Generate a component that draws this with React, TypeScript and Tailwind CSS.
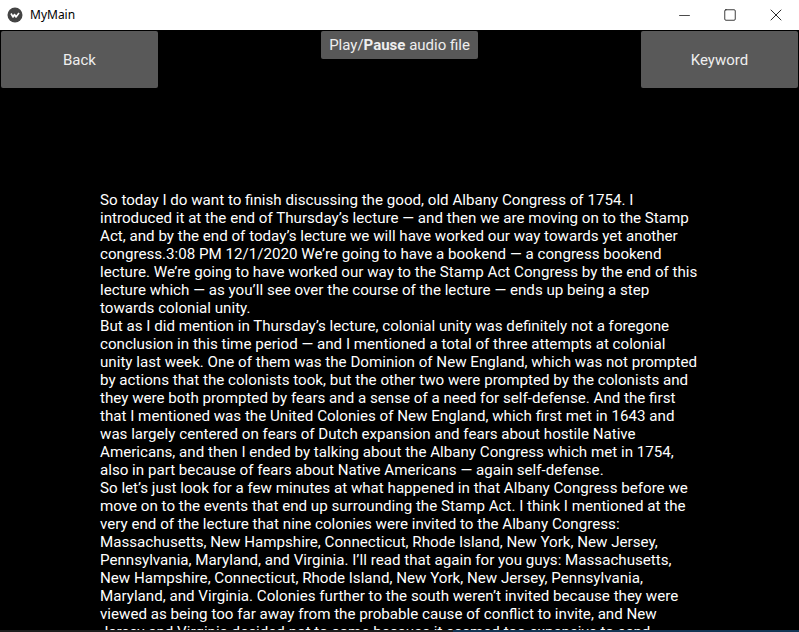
import { Minus, Square, X } from 'lucide-react';

const lines = [
  'So today I do want to finish discussing the good, old Albany Congress of 1754. I',
  'introduced it at the end of Thursday’s lecture — and then we are moving on to the Stamp',
  'Act, and by the end of today’s lecture we will have worked our way towards yet another',
  'congress.3:08 PM 12/1/2020 We’re going to have a bookend — a congress bookend',
  'lecture. We’re going to have worked our way to the Stamp Act Congress by the end of this',
  'lecture which — as you’ll see over the course of the lecture — ends up being a step',
  'towards colonial unity.',
  'But as I did mention in Thursday’s lecture, colonial unity was definitely not a foregone',
  'conclusion in this time period — and I mentioned a total of three attempts at colonial',
  'unity last week. One of them was the Dominion of New England, which was not prompted',
  'by actions that the colonists took, but the other two were prompted by the colonists and',
  'they were both prompted by fears and a sense of a need for self-defense. And the first',
  'that I mentioned was the United Colonies of New England, which first met in 1643 and',
  'was largely centered on fears of Dutch expansion and fears about hostile Native',
  'Americans, and then I ended by talking about the Albany Congress which met in 1754,',
  'also in part because of fears about Native Americans — again self-defense.',
  'So let’s just look for a few minutes at what happened in that Albany Congress before we',
  'move on to the events that end up surrounding the Stamp Act. I think I mentioned at the',
  'very end of the lecture that nine colonies were invited to the Albany Congress:',
  'Massachusetts, New Hampshire, Connecticut, Rhode Island, New York, New Jersey,',
  'Pennsylvania, Maryland, and Virginia. I’ll read that again for you guys: Massachusetts,',
  'New Hampshire, Connecticut, Rhode Island, New York, New Jersey, Pennsylvania,',
  'Maryland, and Virginia. Colonies further to the south weren’t invited because they were',
  'viewed as being too far away from the probable cause of conflict to invite, and New',
  'Jersey and Virginia decided not to come because it seemed too expensive to send',
];

function KivyLogo() {
  return (
    <svg width="16" height="16" viewBox="0 0 16 16">
      <circle cx="8" cy="8" r="7.5" fill="#444" />
      <path d="M4 6.5 L6 10 L7.5 7.5 L9 10 L12 6" stroke="#fff" strokeWidth="1.6" fill="none" strokeLinejoin="round" />
    </svg>
  );
}

function App() {
  return (
    <div className="w-[799px] h-[632px] overflow-hidden flex flex-col bg-black">
      {/* title bar */}
      <div className="h-[30px] bg-white flex items-center shrink-0">
        <div className="pl-[7px] pr-[7px] flex items-center">
          <KivyLogo />
        </div>
        <span className="text-[12px] text-black font-['Noto_Sans',sans-serif]">MyMain</span>
        <div className="ml-auto flex h-full">
          <div className="w-[46px] flex items-center justify-center">
            <Minus className="w-[17px] h-[17px] text-black" strokeWidth={1} />
          </div>
          <div className="w-[46px] flex items-center justify-center">
            <Square className="w-[14px] h-[14px] text-black" strokeWidth={1.3} />
          </div>
          <div className="w-[46px] flex items-center justify-center">
            <X className="w-[20px] h-[20px] text-black" strokeWidth={1} />
          </div>
        </div>
      </div>

      {/* content */}
      <div className="flex-1 flex flex-col font-['Roboto',sans-serif] overflow-hidden">
        <div className="flex items-start pt-[1px] px-[1px] h-[161px] shrink-0">
          <button className="w-[157px] h-[57px] bg-[#595959] rounded-[2px] text-[15px] text-[#eeeeee] pt-[1px]">
            Back
          </button>
          <div className="flex-1 flex justify-center">
            <div className="h-[28px] px-[8px] bg-[#585858] rounded-[2px] text-[15px] text-[#eeeeee] flex items-center">
              <span>
                Play/<b>Pause</b> audio file
              </span>
            </div>
          </div>
          <button className="w-[157px] h-[57px] bg-[#595959] rounded-[2px] text-[15px] text-[#eeeeee] pt-[1px]">
            Keyword
          </button>
        </div>
        <div className="pl-[100px] text-[15.15px] leading-[18px] text-white flex-1 overflow-hidden">
          {lines.map((l, i) => (
            <div key={i} className="whitespace-nowrap">
              {l}
            </div>
          ))}
        </div>
        <div className="h-[2px] flex shrink-0">
          <div className="w-[453px] bg-[#1e1e1e]" />
          <div className="flex-1 bg-[#153655]" />
        </div>
      </div>
    </div>
  );
}

export default App;
